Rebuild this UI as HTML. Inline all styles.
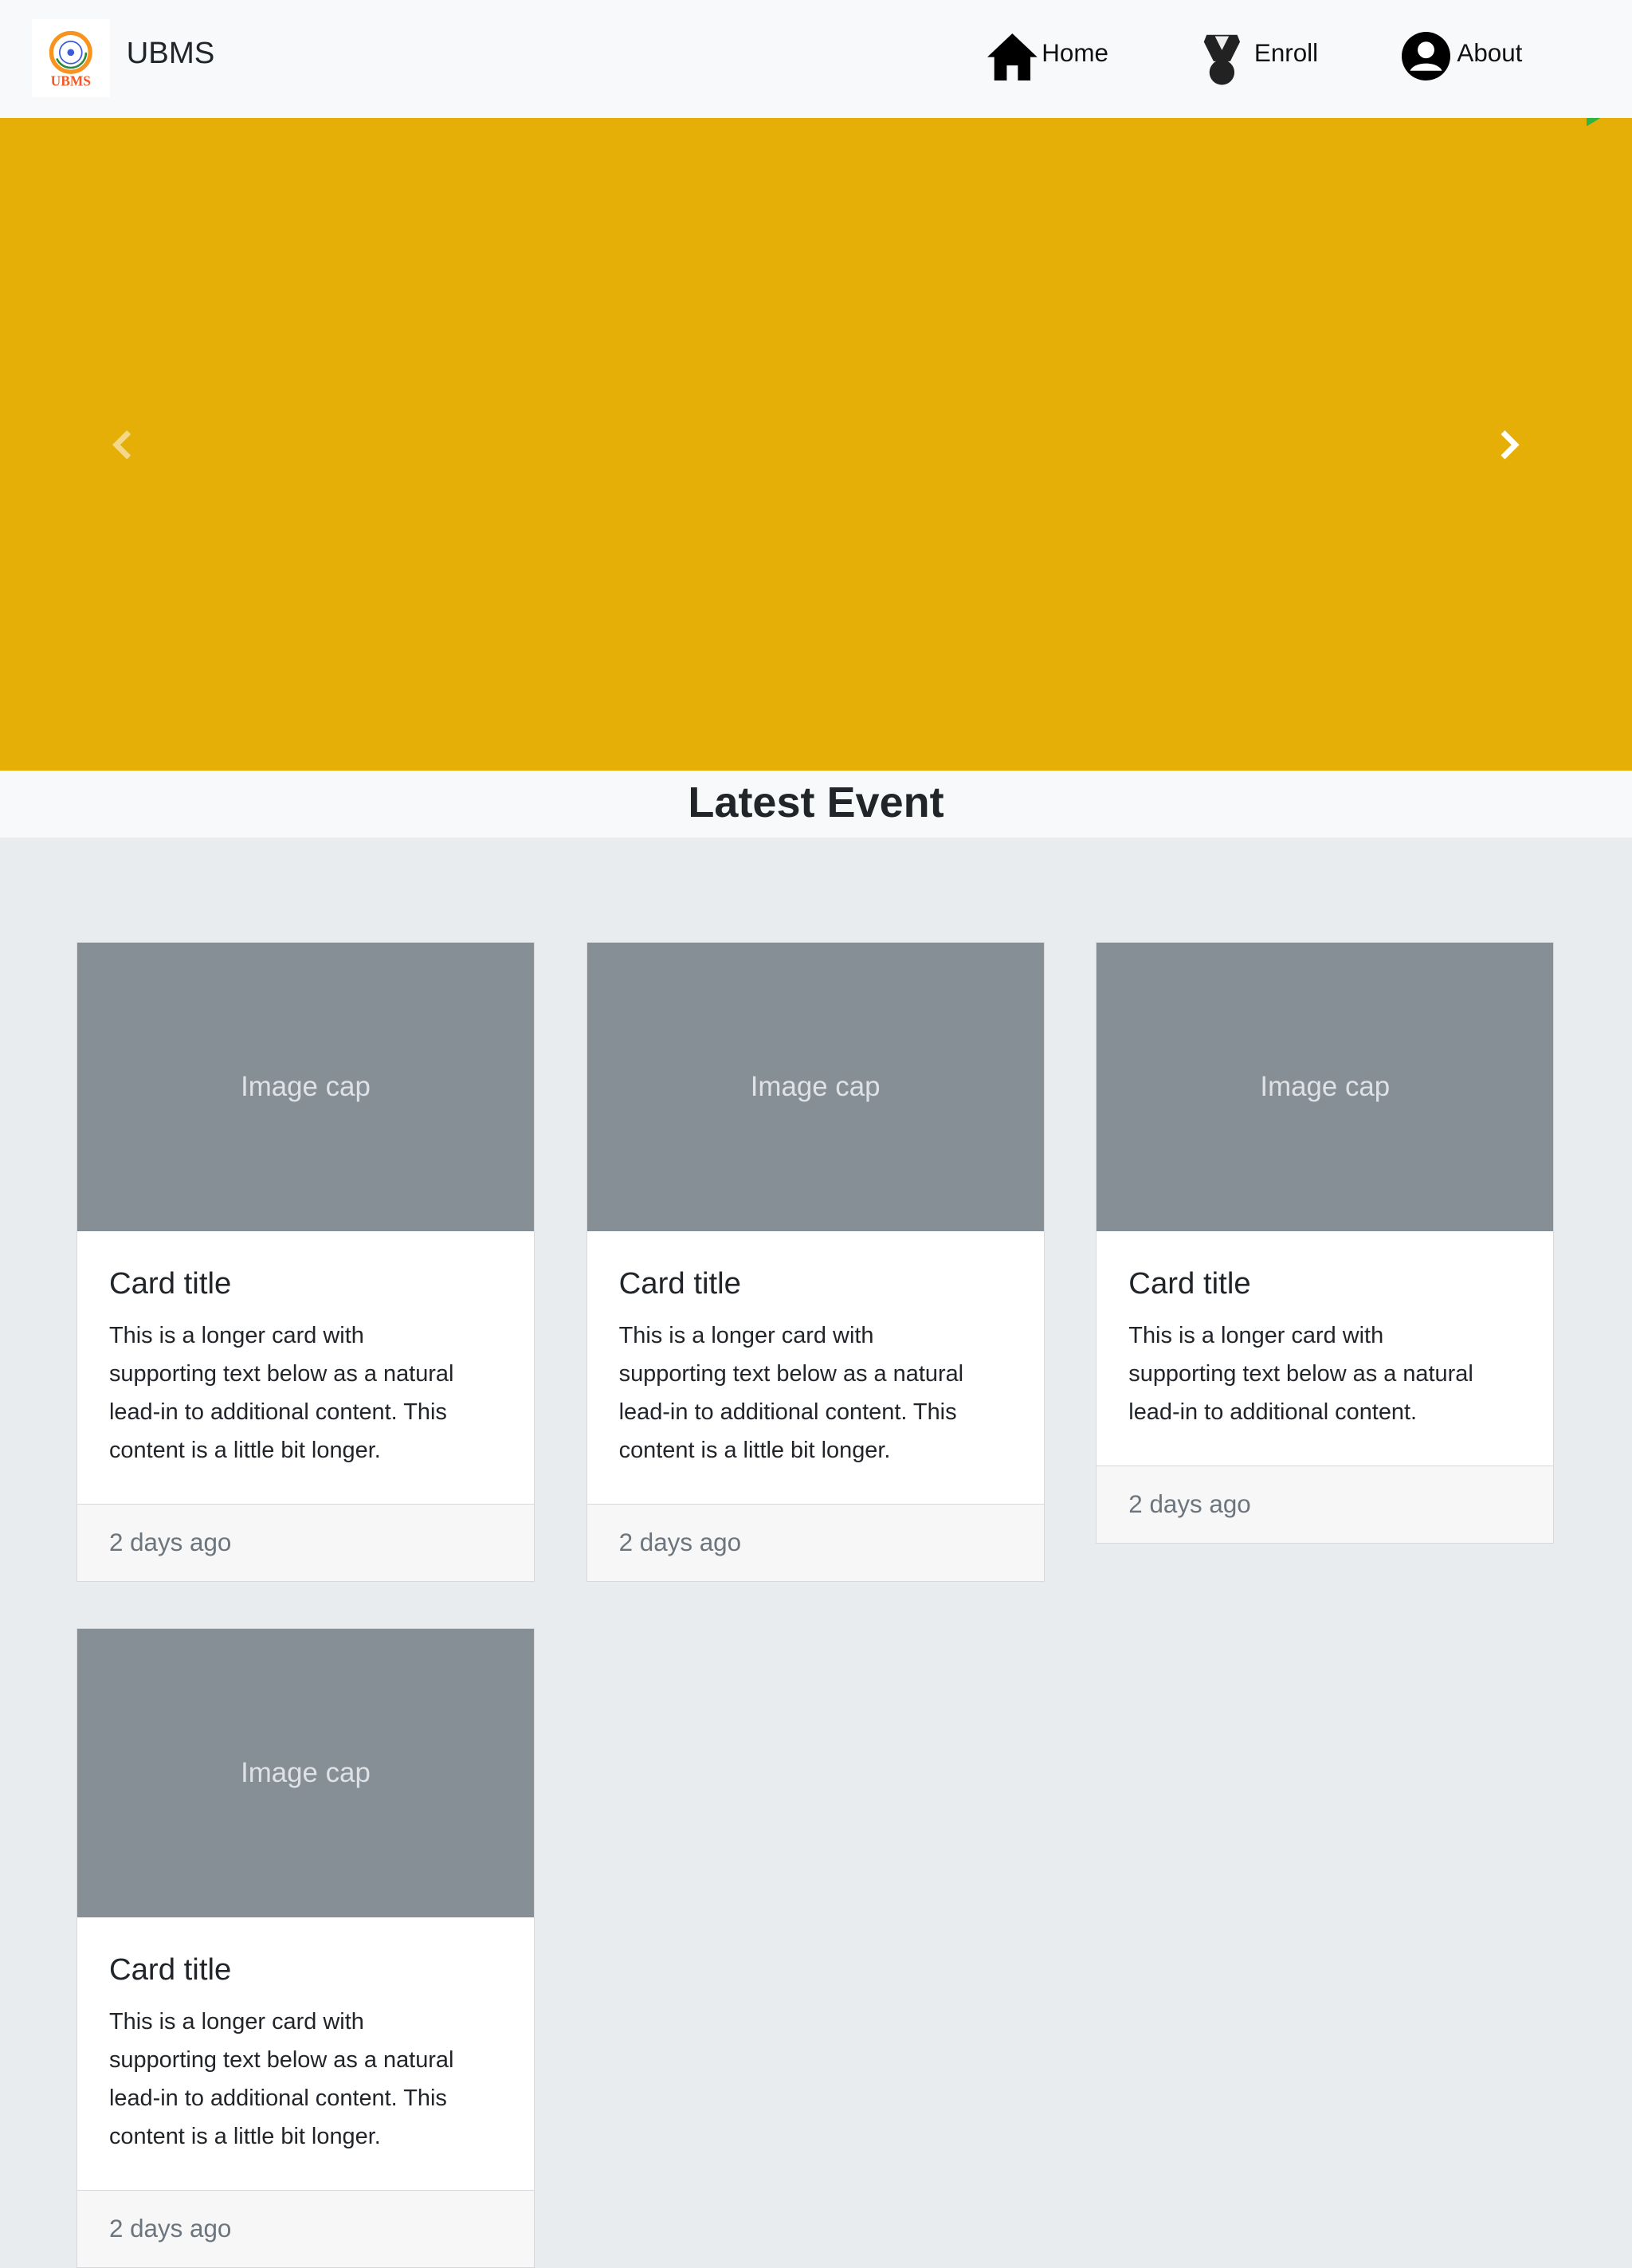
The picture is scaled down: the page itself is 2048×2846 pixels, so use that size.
<!DOCTYPE html>
<html><head><meta charset="utf-8">
<style>
html{zoom:1.743}
body{margin:0;width:1175px;height:1568px;overflow:hidden;font-family:"Liberation Sans",sans-serif;background:#e9ecef;color:#212529;position:relative}
.nav{position:absolute;left:0;top:0;width:1175px;height:85px;background:#f8f9fa}
.logo{position:absolute;left:23px;top:14px;width:56px;height:56px;background:#fff}
.brand{position:absolute;left:91px;top:26px;font-size:22px}
.ni{position:absolute;top:28px;font-size:18px;color:#111}
.car{position:absolute;left:0;top:85px;width:1175px;height:470px;background:#e5af08}
.band{position:absolute;left:0;top:555px;width:1175px;height:48px;background:#f8f9fa;text-align:center}
.band h2{margin:0;font-size:31px;line-height:46px;font-weight:bold}
.cont{position:absolute;left:0;top:603px;width:1175px;height:970px;background:#e9ecef;border-radius:6px 6px 0 0}
.card{position:absolute;width:330px;background:#fff;border:1px solid #d6d8db;box-sizing:border-box}
.img{height:208px;background:#868e96;color:#dee2e6;font-size:20px;text-align:center;line-height:208px}
.bd{padding:24px 23px 24px}
.bd h5{margin:0 0 10px;font-size:22px;line-height:28px;font-weight:normal}
.bd p{margin:0;font-size:16.6px;line-height:27.5px;color:#212529;white-space:nowrap}
.ft{height:55px;border-top:1px solid #d6d8db;background:#f7f7f7;color:#6c757d;font-size:18px;line-height:55px;padding-left:23px}
</style></head><body>
<div class="nav">
 <div class="logo"><svg width="56" height="56" viewBox="0 0 56 56"><circle cx="28" cy="24" r="14" fill="none" stroke="#f7931e" stroke-width="3"/><circle cx="28" cy="24" r="11" fill="none" stroke="#2b8a3e" stroke-width="1.5" stroke-dasharray="30 40"/><circle cx="28" cy="24" r="8" fill="none" stroke="#3b5bdb" stroke-width="1"/><circle cx="28" cy="24" r="2.5" fill="#3b5bdb"/><text x="28" y="48" font-size="10" font-weight="bold" fill="#f05a28" text-anchor="middle" font-family="Liberation Serif">UBMS</text></svg></div>
 <div class="brand">UBMS</div>
 <svg style="position:absolute;left:711px;top:24px" width="36" height="34" viewBox="0 0 36 34"><path d="M18 0L0 17h5v17h9V23h8v11h9V17h5z" fill="#000"/></svg>
 <div class="ni" style="left:750px">Home</div>
 <svg style="position:absolute;left:866px;top:24px" width="28" height="38" viewBox="0 0 28 38"><path d="M3 1h22l2 5-7 14h-12L1 6z" fill="#222"/><path d="M9 2h10l-5 10z" fill="#eee"/><circle cx="14" cy="28" r="9" fill="#222"/></svg>
 <div class="ni" style="left:903px">Enroll</div>
 <svg style="position:absolute;left:1009px;top:23px" width="35" height="35" viewBox="0 0 35 35"><circle cx="17.5" cy="17.5" r="17.5" fill="#000"/><circle cx="17.5" cy="13" r="6" fill="#fff"/><path d="M6 28c3-7 20-7 23 0z" fill="#fff"/></svg>
 <div class="ni" style="left:1049px">About</div>
</div>
<div class="car">
 <svg style="position:absolute;left:80px;top:224px" width="17" height="22" viewBox="0 0 17 22"><path d="M13 2L4 11l9 9" stroke="#f3d889" stroke-width="4" fill="none"/></svg>
 <svg style="position:absolute;left:1078px;top:224px" width="17" height="22" viewBox="0 0 17 22"><path d="M4 2l9 9-9 9" stroke="#fff" stroke-width="4" fill="none"/></svg>
 <svg style="position:absolute;left:1142px;top:0" width="10" height="6"><path d="M0 0h10L0 6z" fill="#2fb344"/></svg>
</div>
<div class="band"><h2>Latest Event</h2></div>
<div class="cont"></div>
<div class="card" style="left:55px;top:678px"><div class="img">Image cap</div><div class="bd"><h5>Card title</h5><p>This is a longer card with<br>supporting text below as a natural<br>lead-in to additional content. This<br>content is a little bit longer.</p></div><div class="ft">2 days ago</div></div>
<div class="card" style="left:422px;top:678px"><div class="img">Image cap</div><div class="bd"><h5>Card title</h5><p>This is a longer card with<br>supporting text below as a natural<br>lead-in to additional content. This<br>content is a little bit longer.</p></div><div class="ft">2 days ago</div></div>
<div class="card" style="left:789px;top:678px"><div class="img">Image cap</div><div class="bd"><h5>Card title</h5><p>This is a longer card with<br>supporting text below as a natural<br>lead-in to additional content.</p></div><div class="ft">2 days ago</div></div>
<div class="card" style="left:55px;top:1172px"><div class="img">Image cap</div><div class="bd"><h5>Card title</h5><p>This is a longer card with<br>supporting text below as a natural<br>lead-in to additional content. This<br>content is a little bit longer.</p></div><div class="ft">2 days ago</div></div>
</body></html>
